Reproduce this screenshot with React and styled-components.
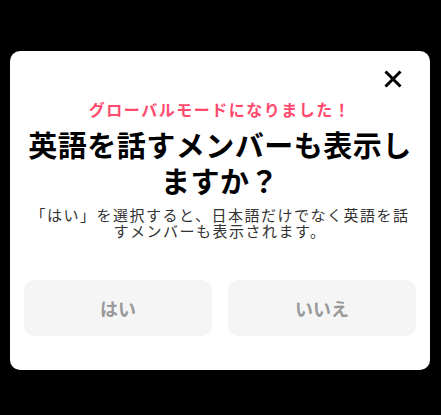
import React from "react";
import styled, { createGlobalStyle } from "styled-components";

const GlobalStyle = createGlobalStyle`
    body {
        margin: 0;
        background: #000;
        font-family: "Noto Sans CJK JP", "Noto Sans", sans-serif;
    }
`;

const Page = styled.div`
    min-height: 415px;
    padding: 51px 11px 0 10px;
    box-sizing: border-box;
`;

const Card = styled.div`
    background: #fff;
    border-radius: 10px;
    padding: 19px 14px 34px;
    display: flex;
    flex-direction: column;
    align-items: center;
`;

const CloseRow = styled.div`
    align-self: stretch;
    display: flex;
    justify-content: flex-end;
    padding-right: 14px;
`;

const CloseButton = styled.button`
    width: 18px;
    height: 18px;
    padding: 0;
    border: none;
    background: none;
    cursor: pointer;
    display: flex;
`;

const Lead = styled.p`
    margin: 10px 0 0;
    font-size: 16px;
    line-height: 22px;
    font-weight: 700;
    letter-spacing: 1.5px;
    color: #ff4a6e;
    text-align: center;
`;

const Title = styled.h1`
    margin: 6px 0 0;
    font-size: 29px;
    line-height: 36px;
    font-weight: 700;
    letter-spacing: 0.5px;
    color: #000;
    text-align: center;
`;

const Desc = styled.p`
    margin: 9px 0 0;
    font-size: 15px;
    line-height: 16px;
    letter-spacing: 1.5px;
    color: #333;
    text-align: center;
`;

const Actions = styled.div`
    align-self: stretch;
    margin-top: 41px;
    display: grid;
    grid-template-columns: 1fr 1fr;
    gap: 16px;
`;

const Choice = styled.button`
    height: 56px;
    border: none;
    border-radius: 10px;
    background: #f5f5f5;
    color: #999;
    font-family: inherit;
    font-size: 18px;
    font-weight: 700;
    cursor: pointer;
`;

const CloseIcon = () => (
    <svg width="18" height="18" viewBox="0 0 18 18">
        <path
            d="M1.5 1.5 L16.5 16.5 M16.5 1.5 L1.5 16.5"
            stroke="#000"
            strokeWidth="3"
            fill="none"
        />
    </svg>
);

export default function App() {
    return (
        <Page>
            <GlobalStyle />
            <Card>
                <CloseRow>
                    <CloseButton aria-label="閉じる">
                        <CloseIcon />
                    </CloseButton>
                </CloseRow>
                <Lead>グローバルモードになりました！</Lead>
                <Title>英語を話すメンバーも表示しますか？</Title>
                <Desc>
                    「はい」を選択すると、日本語だけでなく英語を話すメンバーも表示されます。
                </Desc>
                <Actions>
                    <Choice>はい</Choice>
                    <Choice>いいえ</Choice>
                </Actions>
            </Card>
        </Page>
    );
}
